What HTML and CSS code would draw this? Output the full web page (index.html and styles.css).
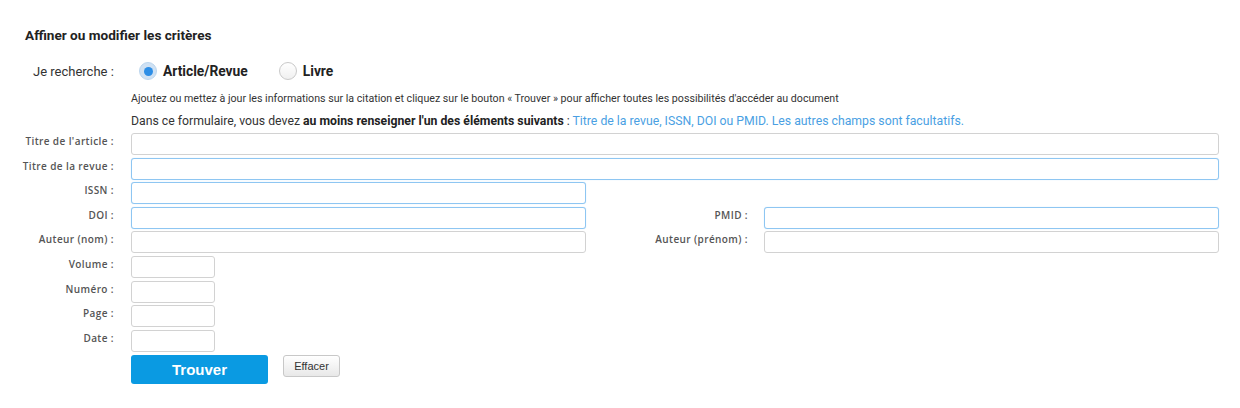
FILE: index.html
```html
<!DOCTYPE html>
<html lang="fr">
<head>
<meta charset="utf-8">
<title>Affiner ou modifier les critères</title>
<link rel="stylesheet" href="styles.css">
</head>
<body>
<div class="page">
  <h2 class="title">Affiner ou modifier les critères</h2>
  <div class="type-row">
    <span class="type-label">Je recherche :</span>
    <label class="radio"><span class="dot checked"></span><span class="radio-text">Article/Revue</span></label>
    <label class="radio"><span class="dot"></span><span class="radio-text">Livre</span></label>
  </div>
  <p class="help">Ajoutez ou mettez à jour les informations sur la citation et cliquez sur le bouton « Trouver » pour afficher toutes les possibilités d'accéder au document</p>
  <p class="required">Dans ce formulaire, vous devez <b>au moins renseigner l'un des éléments suivants</b> : <span class="hl">Titre de la revue, ISSN, DOI ou PMID. Les autres champs sont facultatifs.</span></p>
  <div class="form">
    <span class="lbl">Titre de l'article :</span>
    <span class="field full"></span>

    <span class="lbl">Titre de la revue :</span>
    <span class="field full req"></span>

    <span class="lbl">ISSN :</span>
    <span class="field req"></span>
    <span class="spacer"></span>

    <span class="lbl">DOI :</span>
    <span class="field req"></span>
    <span class="lbl lbl2">PMID :</span>
    <span class="field req"></span>

    <span class="lbl">Auteur (nom) :</span>
    <span class="field"></span>
    <span class="lbl lbl2">Auteur (prénom) :</span>
    <span class="field"></span>

    <span class="lbl">Volume :</span>
    <span class="field small"></span>
    <span class="spacer"></span>

    <span class="lbl">Numéro :</span>
    <span class="field small"></span>
    <span class="spacer"></span>

    <span class="lbl">Page :</span>
    <span class="field small"></span>
    <span class="spacer"></span>

    <span class="lbl">Date :</span>
    <span class="field small"></span>
    <span class="spacer"></span>

    <span></span>
    <div class="buttons">
      <button class="btn-find" type="button">Trouver</button>
      <button class="btn-clear" type="button">Effacer</button>
    </div>
  </div>
</div>
</body>
</html>
```
FILE: styles.css
```css
html, body {
  margin: 0;
  padding: 0;
  background: #ffffff;
}
.page {
  font-family: Roboto, "Liberation Sans", Arial, sans-serif;
  color: #222;
  padding-top: 27px;
}
.title {
  margin: 0 0 0 25px;
  font-size: 13.6px;
  font-weight: 700;
  line-height: 16px;
  color: #222;
}
.type-row {
  display: flex;
  align-items: center;
  margin-top: 19px;
  height: 18px;
  padding-left: 33px;
}
.type-label {
  font-size: 13px;
  color: #333;
  width: 106px;
}
.radio {
  display: flex;
  align-items: center;
  margin-right: 31px;
}
.dot {
  width: 18px;
  height: 18px;
  border-radius: 50%;
  border: 1px solid #c9c9c9;
  background: linear-gradient(#ffffff, #f0f0f0);
  box-sizing: border-box;
  position: relative;
}
.dot.checked {
  border-color: #bcd6ee;
  background: #cfe1f3;
}
.dot.checked::after {
  content: "";
  position: absolute;
  left: 3.5px;
  top: 3.5px;
  width: 9px;
  height: 9px;
  border-radius: 50%;
  background: #2d8ee6;
}
.radio-text {
  font-size: 13.8px;
  font-weight: 700;
  color: #222;
  margin-left: 6px;
}
.help {
  margin: 12px 0 0 131px;
  font-size: 10.65px;
  line-height: 13px;
  color: #333;
}
.required {
  margin: 9px 0 0 131px;
  font-size: 12.25px;
  line-height: 15px;
  color: #333;
}
.required b {
  color: #222;
}
.hl {
  color: #4a9fe3;
}
.form {
  display: grid;
  grid-template-columns: 131px 455px 178px 455px;
  grid-template-rows: repeat(9, 22px) auto;
  row-gap: 2.6px;
  margin-top: 4px;
}
.lbl {
  font-family: "Open Sans", "DejaVu Sans", sans-serif;
  font-size: 10px;
  letter-spacing: 0.4px;
  font-weight: 600;
  color: #555;
  text-align: right;
  padding-right: 17px;
  line-height: 16px;
}
.lbl2 {
  padding-right: 16px;
}
.field {
  display: block;
  box-sizing: border-box;
  height: 22px;
  border: 1px solid #d2d2d2;
  border-radius: 3px;
  background: #fff;
}
.field.req {
  border-color: #8ec6f2;
  box-shadow: 0 0 1px #b6dcf8;
}
.field.full {
  grid-column: 2 / 5;
}
.field.small {
  width: 84px;
}
.spacer {
  grid-column: 3 / 5;
}
.buttons {
  grid-column: 2 / 5;
  display: flex;
  align-items: flex-start;
  gap: 15px;
  padding-top: 1px;
}
.btn-find {
  width: 137px;
  height: 29px;
  border: none;
  border-radius: 3px;
  background: #0a9ae2;
  color: #fff;
  font-family: "Liberation Sans", Arial, sans-serif;
  font-weight: 700;
  font-size: 15px;
  padding: 0;
}
.btn-clear {
  width: 57px;
  height: 22px;
  border: 1px solid #c8c8c8;
  border-radius: 3px;
  background: linear-gradient(#ffffff, #e8e8e8);
  color: #333;
  font-family: "Liberation Sans", Arial, sans-serif;
  font-size: 11px;
  padding: 0;
}
```
